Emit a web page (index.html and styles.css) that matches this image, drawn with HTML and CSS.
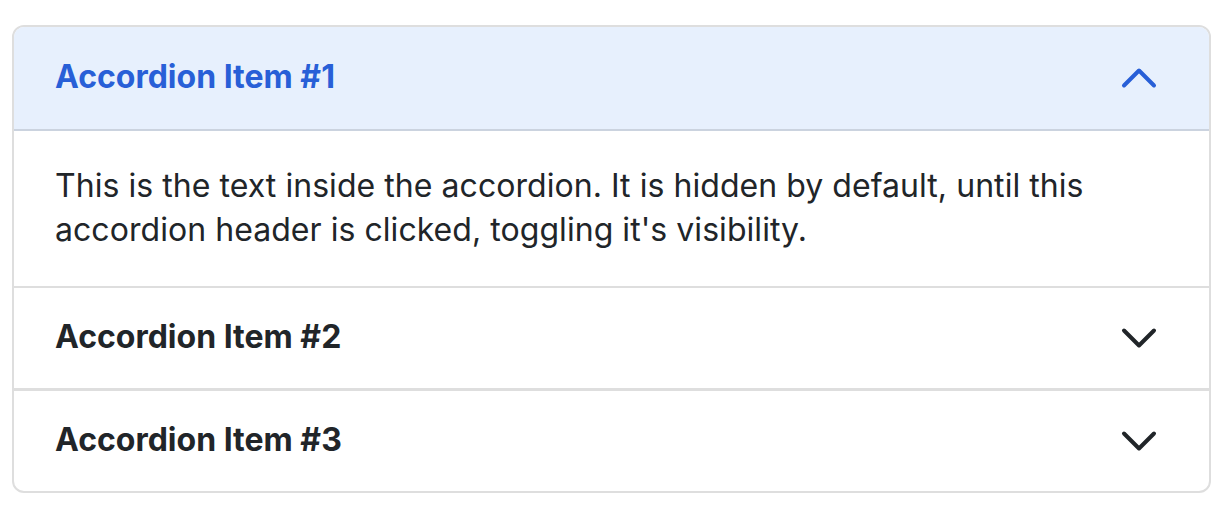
FILE: index.html
```html
<!DOCTYPE html>
<html lang="en">
<head>
<meta charset="utf-8">
<title>Accordion</title>
<link rel="stylesheet" href="styles.css">
</head>
<body>
<div class="accordion">
  <div class="item">
    <div class="header active">
      <span class="title">Accordion Item #1</span>
      <svg class="chev" width="40" height="40" viewBox="0 0 16 16"><path d="M2 11L8 5L14 11" fill="none" stroke="currentColor" stroke-width="1.6" stroke-linecap="round" stroke-linejoin="round"/></svg>
    </div>
    <div class="body">This is the text inside the accordion. It is hidden by default, until this accordion header is clicked, toggling it's visibility.</div>
  </div>
  <div class="item">
    <div class="header">
      <span class="title">Accordion Item #2</span>
      <svg class="chev" width="40" height="40" viewBox="0 0 16 16"><path d="M2 5L8 11L14 5" fill="none" stroke="currentColor" stroke-width="1.6" stroke-linecap="round" stroke-linejoin="round"/></svg>
    </div>
  </div>
  <div class="item">
    <div class="header">
      <span class="title">Accordion Item #3</span>
      <svg class="chev" width="40" height="40" viewBox="0 0 16 16"><path d="M2 5L8 11L14 5" fill="none" stroke="currentColor" stroke-width="1.6" stroke-linecap="round" stroke-linejoin="round"/></svg>
    </div>
  </div>
</div>
</body>
</html>
```
FILE: styles.css
```css
html, body {
  margin: 0;
  padding: 0;
  background: #ffffff;
}
body {
  font-family: Inter, "Noto Sans", sans-serif;
  color: #212529;
  padding: 25px 11px 0 12px;
}
.accordion {
  border: 2px solid #dedede;
  border-radius: 12px;
  overflow: hidden;
  background: #fff;
}
.item + .item {
  border-top: 2px solid #dedede;
}
.item + .item + .item {
  border-top-width: 3px;
}
.header {
  height: 100px;
  box-sizing: border-box;
  display: flex;
  align-items: center;
  justify-content: space-between;
  padding: 0 50px 3px 41px;
  color: #212529;
}
.header.active {
  height: 104px;
  background: #e7f0fd;
  color: #285fd7;
  border-bottom: 2px solid #cbd3df;
}
.chev {
  display: block;
}
.header .chev {
  margin-top: 3px;
}
.title {
  font-size: 32px;
  font-weight: 700;
  letter-spacing: 0;
}
.body {
  padding: 33px 41px 34px;
  font-size: 32px;
  line-height: 44px;
  letter-spacing: 0.05px;
  color: #212529;
}
```
